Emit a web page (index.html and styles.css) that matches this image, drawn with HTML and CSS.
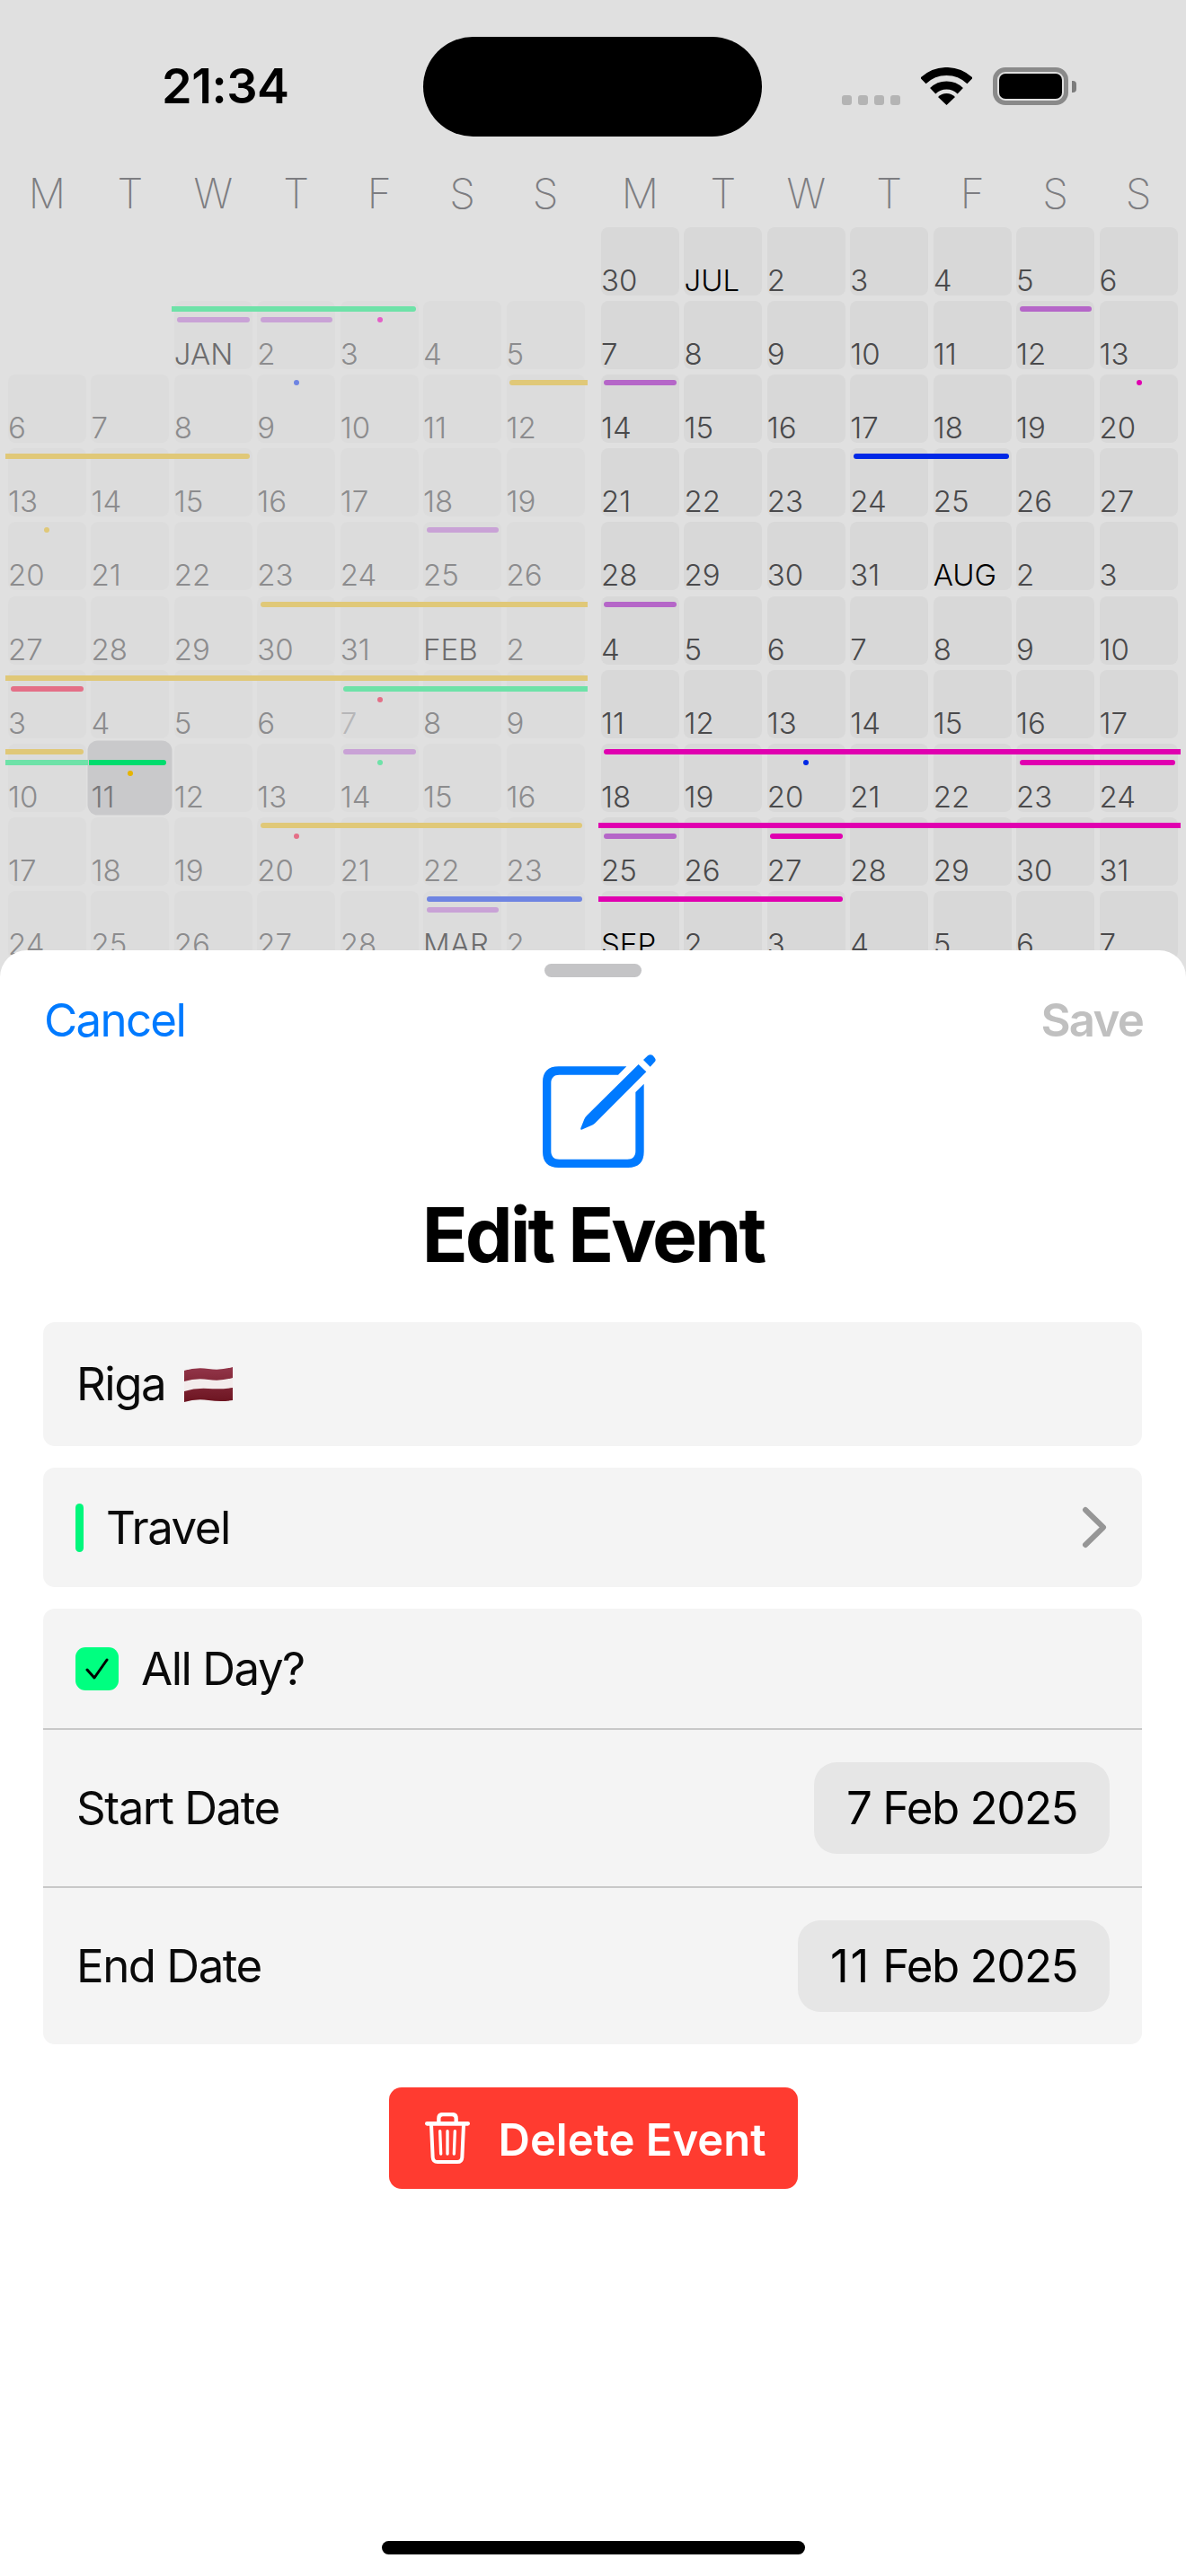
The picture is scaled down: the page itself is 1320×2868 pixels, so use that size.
FILE: index.html
```html
<!DOCTYPE html>
<html lang="en">
<head>
<meta charset="utf-8">
<title>Edit Event</title>
<link rel="stylesheet" href="styles.css">
</head>
<body>
<div class="phone">
  <header class="status">
    <div class="time">21:34</div>
    <div class="island"></div>
    <div class="status-icons">
      <div class="signal"><i></i><i></i><i></i><i></i></div>
      <svg class="wifi" width="57" height="42" viewBox="0 0 57 42"><path d="M2.45 15A37.5 37.5 0 0 1 54.55 15" fill="none" stroke="#000" stroke-width="9"/><path d="M13.2 26.2A22 22 0 0 1 43.8 26.2" fill="none" stroke="#000" stroke-width="9"/><path d="M28.5 42L19 33A13.5 13.5 0 0 1 38 33Z" fill="#000"/></svg>
      <div class="battery"><div class="battery-body"><div class="battery-fill"></div></div><div class="battery-nub"></div></div>
    </div>
  </header>

  <div class="cal">
    <section class="month past">
      <div class="weekdays"><span>M</span><span>T</span><span>W</span><span>T</span><span>F</span><span>S</span><span>S</span></div>
      <div class="week"></div>
      <div class="week">
        <div class="day blank"></div><div class="day blank"></div><div class="day mon">JAN</div><div class="day">2</div><div class="day">3</div><div class="day">4</div><div class="day">5</div>
        <div class="ev l0 green fl" style="left:191px;width:272px"></div>
        <div class="ev l1 purple" style="left:197px;width:81px"></div>
        <div class="ev l1 purple" style="left:290px;width:80px"></div>
        <div class="dot l1 pink" style="left:420px"></div>
      </div>
      <div class="week">
        <div class="day">6</div><div class="day">7</div><div class="day">8</div><div class="day">9</div><div class="day">10</div><div class="day">11</div><div class="day">12</div>
        <div class="dot l0 blue" style="left:327px"></div>
        <div class="ev l0 gold fr" style="left:567px;width:87px"></div>
      </div>
      <div class="week">
        <div class="day">13</div><div class="day">14</div><div class="day">15</div><div class="day">16</div><div class="day">17</div><div class="day">18</div><div class="day">19</div>
        <div class="ev l0 gold fl" style="left:6px;width:272px"></div>
      </div>
      <div class="week">
        <div class="day">20</div><div class="day">21</div><div class="day">22</div><div class="day">23</div><div class="day">24</div><div class="day">25</div><div class="day">26</div>
        <div class="dot l0 gold" style="left:49px"></div>
        <div class="ev l0 purple" style="left:475px;width:80px"></div>
      </div>
      <div class="week">
        <div class="day">27</div><div class="day">28</div><div class="day">29</div><div class="day">30</div><div class="day">31</div><div class="day mon">FEB</div><div class="day">2</div>
        <div class="ev l0 gold fr" style="left:290px;width:364px"></div>
      </div>
      <div class="week">
        <div class="day">3</div><div class="day">4</div><div class="day">5</div><div class="day">6</div><div class="day faint">7</div><div class="day">8</div><div class="day">9</div>
        <div class="ev l0 gold fl fr" style="left:6px;width:648px"></div>
        <div class="ev l1 red" style="left:12px;width:81px"></div>
        <div class="ev l1 green fr" style="left:382px;width:272px"></div>
        <div class="dot l2 red" style="left:420px"></div>
      </div>
      <div class="week">
        <div class="day">10</div><div class="day today">11</div><div class="day">12</div><div class="day">13</div><div class="day">14</div><div class="day">15</div><div class="day">16</div>
        <div class="ev l0 gold fl" style="left:6px;width:87px"></div>
        <div class="ev l1 green fl fr" style="left:6px;width:92px"></div>
        <div class="ev l1 vivid fl" style="left:99px;width:86px"></div>
        <div class="dot l2 amber" style="left:142px"></div>
        <div class="ev l0 purple" style="left:382px;width:81px"></div>
        <div class="dot l1 green" style="left:420px"></div>
      </div>
      <div class="week">
        <div class="day">17</div><div class="day">18</div><div class="day">19</div><div class="day">20</div><div class="day">21</div><div class="day">22</div><div class="day">23</div>
        <div class="ev l0 gold" style="left:290px;width:358px"></div>
        <div class="dot l1 red" style="left:327px"></div>
      </div>
      <div class="week">
        <div class="day">24</div><div class="day">25</div><div class="day">26</div><div class="day">27</div><div class="day">28</div><div class="day mon">MAR</div><div class="day">2</div>
        <div class="ev l0 blue" style="left:475px;width:173px"></div>
        <div class="ev l1 purple" style="left:475px;width:80px"></div>
      </div>
    </section>

    <section class="month">
      <div class="weekdays"><span>M</span><span>T</span><span>W</span><span>T</span><span>F</span><span>S</span><span>S</span></div>
      <div class="week">
        <div class="day">30</div><div class="day mon">JUL</div><div class="day">2</div><div class="day">3</div><div class="day">4</div><div class="day">5</div><div class="day">6</div>
      </div>
      <div class="week">
        <div class="day">7</div><div class="day">8</div><div class="day">9</div><div class="day">10</div><div class="day">11</div><div class="day">12</div><div class="day">13</div>
        <div class="ev l0 purple" style="left:475px;width:80px"></div>
      </div>
      <div class="week">
        <div class="day">14</div><div class="day">15</div><div class="day">16</div><div class="day">17</div><div class="day">18</div><div class="day">19</div><div class="day">20</div>
        <div class="ev l0 purple" style="left:12px;width:81px"></div>
        <div class="dot l0 magenta" style="left:605px"></div>
      </div>
      <div class="week">
        <div class="day">21</div><div class="day">22</div><div class="day">23</div><div class="day">24</div><div class="day">25</div><div class="day">26</div><div class="day">27</div>
        <div class="ev l0 blue" style="left:290px;width:173px"></div>
      </div>
      <div class="week">
        <div class="day">28</div><div class="day">29</div><div class="day">30</div><div class="day">31</div><div class="day mon">AUG</div><div class="day">2</div><div class="day">3</div>
      </div>
      <div class="week">
        <div class="day">4</div><div class="day">5</div><div class="day">6</div><div class="day">7</div><div class="day">8</div><div class="day">9</div><div class="day">10</div>
        <div class="ev l0 purple" style="left:12px;width:81px"></div>
      </div>
      <div class="week">
        <div class="day">11</div><div class="day">12</div><div class="day">13</div><div class="day">14</div><div class="day">15</div><div class="day">16</div><div class="day">17</div>
      </div>
      <div class="week">
        <div class="day">18</div><div class="day">19</div><div class="day">20</div><div class="day">21</div><div class="day">22</div><div class="day">23</div><div class="day">24</div>
        <div class="ev l0 magenta fr" style="left:12px;width:642px"></div>
        <div class="dot l1 blue" style="left:234px"></div>
        <div class="ev l1 magenta" style="left:475px;width:173px"></div>
      </div>
      <div class="week">
        <div class="day">25</div><div class="day">26</div><div class="day">27</div><div class="day">28</div><div class="day">29</div><div class="day">30</div><div class="day">31</div>
        <div class="ev l0 magenta fl fr" style="left:6px;width:648px"></div>
        <div class="ev l1 purple" style="left:12px;width:81px"></div>
        <div class="ev l1 magenta" style="left:197px;width:81px"></div>
      </div>
      <div class="week">
        <div class="day mon">SEP</div><div class="day">2</div><div class="day">3</div><div class="day">4</div><div class="day">5</div><div class="day">6</div><div class="day">7</div>
        <div class="ev l0 magenta fl" style="left:6px;width:272px"></div>
      </div>
    </section>
  </div>

  <main class="sheet">
    <div class="handle"></div>
    <nav class="nav"><span class="cancel">Cancel</span><span class="save">Save</span></nav>
    <svg class="edit-icon" width="150" height="150" viewBox="0 0 450 450">
      <path fill="#007aff" d="M322 82H95C60 82 42 100 42 135V367C42 402 60 420 95 420H327C362 420 380 402 380 367V140L352 168V365C352 382 342 392 325 392H97C80 392 70 382 70 365V137C70 120 80 110 97 110H294Z"/>
      <path fill="#007aff" d="M362 75L388 100L216 272Q210 277 203 280L172 293Q167 294 169 288L181 258Q184 250 190 245Z"/>
      <path fill="#007aff" d="M378 60L393 46Q402 39 410 46L416 53Q422 60 416 67L401 83Z"/>
    </svg>
    <h1 class="title">Edit Event</h1>
    <div class="card name-row"><span>Riga</span>
      <svg class="flag" width="54" height="39" viewBox="0 0 54 39">
        <defs><linearGradient id="shade" x1="0" x2="0" y1="0" y2="1"><stop offset="0" stop-color="#93364a"/><stop offset="1" stop-color="#6c1420"/></linearGradient></defs>
        <path fill="url(#shade)" d="M0 4Q13 0 27 2T54 0V37Q41 39 27 37T0 39Z"/>
        <path fill="#f3ecec" d="M0 16Q13 12 27 14T54 12V23Q41 25 27 24T0 27Z"/>
      </svg>
    </div>
    <div class="card category-row">
      <div class="cat-bar"></div><span class="cat-label">Travel</span>
      <svg class="chevron" width="28" height="47" viewBox="0 0 28 47"><path d="M4 4L24 23.5L4 43" fill="none" stroke="#969696" stroke-width="6" stroke-linecap="round" stroke-linejoin="round"/></svg>
    </div>
    <div class="card group">
      <div class="row allday">
        <div class="check"><svg width="26" height="26" viewBox="0 0 26 26"><path d="M2 14L10 23L24 3" fill="none" stroke="#000" stroke-width="3" stroke-linecap="round" stroke-linejoin="round"/></svg></div>
        <span>All Day?</span>
      </div>
      <div class="row date"><span>Start Date</span><div class="pill">7 Feb 2025</div></div>
      <div class="row date"><span>End Date</span><div class="pill"><span class="wide-num">11</span> Feb 2025</div></div>
    </div>
    <button class="delete" type="button">
      <svg width="50" height="57" viewBox="0 0 150 171">
        <g fill="none" stroke="#fff" stroke-linecap="round" stroke-linejoin="round">
          <path stroke-width="14" d="M7 37H143"/>
          <path stroke-width="13" d="M46 36V20Q46 6 60 6H90Q104 6 104 20V36"/>
          <path stroke-width="12" d="M21 40L26 150Q27 165 42 165H108Q123 165 124 150L129 40"/>
          <path stroke-width="10" d="M50 62L53 138M75 62V138M100 62L97 138"/>
        </g>
      </svg>
      <span class="delete-label">Delete Event</span>
    </button>
    <div class="home"></div>
  </main>
</div>
</body>
</html>
```

FILE: styles.css
```css
* { box-sizing: border-box; }
html, body { margin: 0; padding: 0; }
body { font-family: Inter, "Liberation Sans", sans-serif; background: #e0e0e0; }

.phone { position: relative; width: 1320px; height: 2868px; overflow: hidden; background: #e0e0e0; }

/* Status bar */
.status { display: grid; grid-template-columns: 471px 377px 1fr; height: 185px; padding-top: 41px; }
.time { padding-left: 180px; margin-top: 24px; font-size: 54px; line-height: 62px; font-weight: 600; color: #000; letter-spacing: -0.5px; }
.island { height: 111px; border-radius: 55.5px; background: #000; }
.status-icons { display: flex; align-items: flex-start; padding: 34px 0 0 89px; }
.signal { display: flex; gap: 7px; margin-top: 31px; }
.signal i { width: 11px; height: 11px; border-radius: 3px; background: #b4b4b4; }
.wifi { margin-left: 23px; }
.battery { display: flex; align-items: center; margin-left: 23px; }
.battery-body { width: 84px; height: 42px; padding: 2px; border: 5px solid #8a8a8a; border-radius: 14px; }
.battery-fill { height: 28px; border-radius: 7px; background: #000; }
.battery-nub { width: 5px; height: 13px; margin-left: 4px; border-radius: 0 4px 4px 0; background: #7c7c7c; }

/* Calendar */
.cal { display: flex; }
.month { width: 660px; flex: none; display: flex; flex-direction: column; gap: 6.1px; }
.weekdays { display: grid; grid-template-columns: repeat(7, 87px); column-gap: 5.43px; height: 62px; padding-left: 9px; font-size: 46px; line-height: 60px; font-weight: 250; color: #7d7d81; text-align: center; }
.week { position: relative; display: grid; grid-template-columns: repeat(7, 87px); column-gap: 5.43px; height: 76px; padding-left: 9px; }
.day { display: flex; align-items: flex-end; border-radius: 8px; background: #d8d8d8; color: #4a4a4c; font-size: 33px; line-height: 34px; font-weight: 300; white-space: nowrap; }
.day.mon { color: #000; font-weight: 350; }
.past .day { background: #dcdcdc; color: #8c8c8e; }
.past .day.mon { color: #6c6c6e; }
.past .day.faint { color: #b6b6b8; }
.past .day.blank { background: transparent; }
.past .day.today { background: #c9c9cb; color: #77777a; box-shadow: 0 0 0 3.5px #c9c9cb; }

/* Events */
.ev { position: absolute; height: 6px; border-radius: 3px; }
.dot { position: absolute; width: 6px; height: 6px; border-radius: 50%; }
.fl { border-top-left-radius: 0; border-bottom-left-radius: 0; }
.fr { border-top-right-radius: 0; border-bottom-right-radius: 0; }
.l0 { top: 6px; }
.l1 { top: 18px; }
.l2 { top: 30px; }
.green { background: #6ee2a8; }
.vivid { background: #00dc6e; }
.gold { background: #e0c878; }
.amber { background: #e6b400; }
.red { background: #e46f87; }
.past .purple { background: #c9a2d6; }
.past .blue { background: #6e84e2; }
.pink { background: #e45fc8; }
.purple { background: #b566c8; }
.blue { background: #0028e6; }
.magenta { background: #e000b0; }

/* Sheet */
.sheet { position: absolute; top: 1058px; left: 0; right: 0; bottom: 0; display: flex; flex-direction: column; padding: 15px 48px 0; border-radius: 30px 30px 0 0; background: #fff; color: #000; }
.handle { align-self: center; width: 108px; height: 15px; border-radius: 7.5px; background: #c4c4c6; flex: none; }
.nav { display: flex; justify-content: space-between; height: 62px; margin-top: 17px; padding: 0 0 0 1px; font-size: 51px; line-height: 62px; }
.cancel { color: #007aff; letter-spacing: -1.7px; }
.save { color: #c0c0c0; font-weight: 600; letter-spacing: -1.8px; }
.edit-icon { align-self: flex-start; margin: -7px 0 0 542px; flex: none; }
.title { margin: 15px 0 0; font-size: 84px; line-height: 100px; font-weight: 700; text-align: center; letter-spacing: -3px; }

.card { display: flex; align-items: center; flex: none; width: 1223px; border-radius: 13px; background: #f4f4f4; font-size: 51px; line-height: 62px; color: #0a0a0a; letter-spacing: -1.5px; }
.name-row { height: 138px; margin-top: 47px; padding-left: 37px; gap: 21px; }
.category-row { height: 133px; margin-top: 24px; padding: 0 39px 0 36px; }
.cat-bar { width: 9px; height: 54px; border-radius: 4.5px; background: #00f77c; }
.cat-label { margin-left: 25px; flex: 1; }
.group { display: block; height: 485px; margin-top: 24px; }
.row { display: flex; align-items: center; padding: 0 36px 0 37px; }
.allday { height: 133px; padding-left: 36px; gap: 25px; }
.check { display: flex; align-items: center; justify-content: center; width: 48px; height: 48px; border-radius: 11px; background: #00ff80; }
.date { justify-content: space-between; height: 176px; border-top: 2px solid #c8c8c8; }
.pill { height: 102px; padding: 0 36px; border-radius: 25px; background: #e6e6e6; line-height: 102px; color: #000; }
.wide-num { letter-spacing: 2px; }

.delete { display: flex; align-items: center; align-self: center; flex: none; width: 455px; height: 113px; margin-top: 48px; padding: 0 0 0 40px; gap: 32px; border: 0; border-radius: 14px; background: #ff3b30; color: #fff; font: 600 49px/60px Inter, "Liberation Sans", sans-serif; }
.delete-label { margin-top: 5px; }
.home { align-self: center; width: 471px; height: 15px; margin: auto 0 24px; border-radius: 7.5px; background: #000; flex: none; }
```
